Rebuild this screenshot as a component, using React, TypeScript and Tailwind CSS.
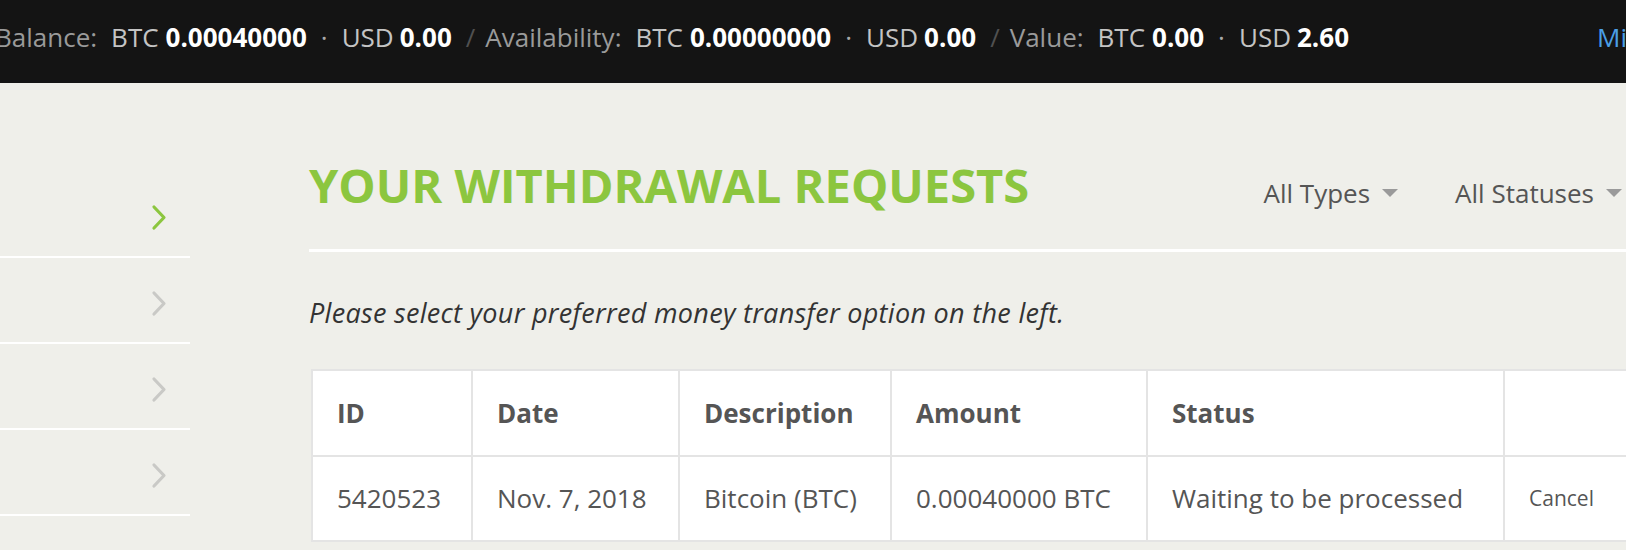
import React from "react";

const Chevron = ({ active = false }: { active?: boolean }) => (
  <svg width="16" height="27" viewBox="0 0 16 27" fill="none">
    <polyline
      points="3,3 13,13.5 3,24"
      stroke={active ? "#8cc63f" : "#c9c9c6"}
      strokeWidth="3.2"
      strokeLinecap="round"
      strokeLinejoin="round"
    />
  </svg>
);

const Caret = () => (
  <svg width="16" height="8" viewBox="0 0 16 8" className="ml-[12px]">
    <polygon points="0,0 16,0 8,8" fill="#9a9a9a" />
  </svg>
);

function Amount({ label, btc, usd, first = false }: { label: string; btc: string; usd: string; first?: boolean }) {
  return (
    <div className={`flex items-center ${first ? "" : "ml-[10px]"}`}>
      <span className="text-[#9a9a9a]">{label}</span>
      <span className="ml-[14px] text-[#c4c4c4]">BTC</span>
      <span className="ml-[7px] font-bold text-white">{btc}</span>
      <span className="mx-[14px] text-[#a8a8a8]">·</span>
      <span className="text-[#c4c4c4]">USD</span>
      <span className="ml-[6px] font-bold text-white">{usd}</span>
    </div>
  );
}

const Slash = () => <span className="ml-[14px] text-[#505050]">/</span>;

const headers = ["ID", "Date", "Description", "Amount", "Status", ""];
const row = ["5420523", "Nov. 7, 2018", "Bitcoin (BTC)", "0.00040000 BTC", "Waiting to be processed"];
const widths = ["w-[160px]", "w-[207px]", "w-[212px]", "w-[256px]", "w-[357px]", "w-[200px]"];

export default function App() {
  return (
    <div className="w-full h-[550px] overflow-hidden font-['Open_Sans',sans-serif]">
      <header className="h-[83px] bg-[#141414] flex items-center pb-[9px] whitespace-nowrap text-[26px] leading-none">
        <div className="flex items-center ml-[-5px] flex-none">
          <Amount first label="Balance:" btc="0.00040000" usd="0.00" />
          <Slash />
          <Amount label="Availability:" btc="0.00000000" usd="0.00" />
          <Slash />
          <Amount label="Value:" btc="0.00" usd="2.60" />
          <span className="ml-[248px] text-[#4a9fe6]">Mi cuenta</span>
        </div>
      </header>

      <main className="h-[467px] bg-[#efefea] flex">
        <aside className="w-[190px] flex-none pt-[89px]">
          {[true, false, false, false].map((active, i) => (
            <div
              key={i}
              className="h-[86px] border-b-2 border-white flex items-center justify-end pr-[23px] pt-[6px]">
              <Chevron active={active} />
            </div>
          ))}
        </aside>

        <section className="ml-[119px] w-[1330px] flex-none pt-[79px]">
          <div className="flex items-baseline justify-between pb-[40px] border-b-[3px] border-white pr-[17px]">
            <h1 className="text-[47px] leading-none font-bold text-[#8cc63f]">
              YOUR WITHDRAWAL REQUESTS
            </h1>
            <div className="flex items-baseline text-[26px] leading-none text-[#555]">
              <span className="flex items-center">
                All Types
                <Caret />
              </span>
              <span className="flex items-center ml-[57px]">
                All Statuses
                <Caret />
              </span>
            </div>
          </div>

          <p className="mt-[47px] text-[27px] leading-none italic tracking-[0.3px] text-[#333]">
            Please select your preferred money transfer option on the left.
          </p>

          <div className="mt-[43px] ml-[2px] bg-white border-l-2 border-t-2 border-[#e4e4e4] inline-flex flex-col text-[26px] text-[#555]">
            <div className="flex">
              {headers.map((h, i) => (
                <div
                  key={i}
                  className={`${widths[i]} h-[86px] border-r-2 border-b-2 border-[#e4e4e4] flex items-center pl-[24px] font-bold`}>
                  {h}
                </div>
              ))}
            </div>
            <div className="flex">
              {row.map((c, i) => (
                <div
                  key={i}
                  className={`${widths[i]} h-[85px] border-r-2 border-b-2 border-[#e4e4e4] flex items-center pl-[24px]`}>
                  {c}
                </div>
              ))}
              <div className={`${widths[5]} h-[85px] border-r-2 border-b-2 border-[#e4e4e4] flex items-center pl-[24px] text-[21px]`}>
                Cancel
              </div>
            </div>
          </div>
        </section>
      </main>
    </div>
  );
}
